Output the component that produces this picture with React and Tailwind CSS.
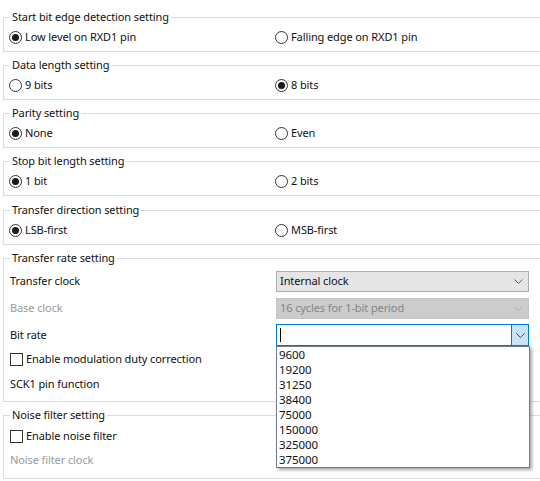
import React from "react";

const font = { fontFamily: '"Noto Sans", "Open Sans", sans-serif' };

function Radio({ checked, label }) {
  return (
    <div className="flex items-center gap-[3px] w-[266px] shrink-0">
      <span className="flex h-[13px] w-[13px] items-center justify-center rounded-full border border-[#333333] bg-white">
        {checked && <span className="h-[7px] w-[7px] rounded-full bg-[#1a1a1a]" />}
      </span>
      <span>{label}</span>
    </div>
  );
}

function Checkbox({ label, className = "" }) {
  return (
    <div className={"flex h-[22px] items-center gap-[3px] pl-[6px] " + className}>
      <span className="h-[13px] w-[13px] border border-[#333333] bg-white" />
      <span>{label}</span>
    </div>
  );
}

function Chevron({ color = "#606060" }) {
  return (
    <svg width="9" height="5" viewBox="0 0 9 5" fill="none">
      <path d="M0.5 0.5 L4.5 4.5 L8.5 0.5" stroke={color} strokeWidth="1" />
    </svg>
  );
}

function Group({ title, children, className = "" }) {
  return (
    <fieldset className={"ml-[3px] w-[560px] border border-[#dcdcdc] px-0 " + className}>
      <legend className="ml-[6px] px-[2px] leading-[16px]">{title}</legend>
      {children}
    </fieldset>
  );
}

function RadioGroup({ title, options, checked, className = "mt-[5px]" }) {
  return (
    <Group title={title} className={"pb-[4px] pt-[2px] " + className}>
      <div className="flex h-[20px] items-center pl-[5px]">
        {options.map((o, i) => (
          <Radio key={o} label={o} checked={i === checked} />
        ))}
      </div>
    </Group>
  );
}

const rates = ["9600", "19200", "31250", "38400", "75000", "150000", "325000", "375000"];

export default function App() {
  return (
    <div
      className="h-[481px] w-[540px] overflow-hidden bg-white text-[11px] tracking-[-0.1px] text-[#111111]"
      style={font}
    >
      <div className="pt-[4px]">
        <RadioGroup
          title="Start bit edge detection setting"
          options={["Low level on RXD1 pin", "Falling edge on RXD1 pin"]}
          checked={0}
        />
        <RadioGroup title="Data length setting" options={["9 bits", "8 bits", "7 bits"]} checked={1} />
        <RadioGroup title="Parity setting" options={["None", "Even", "Odd"]} checked={0} />
        <RadioGroup title="Stop bit length setting" options={["1 bit", "2 bits"]} checked={0} />
        <RadioGroup
          title="Transfer direction setting"
          options={["LSB-first", "MSB-first"]}
          checked={0}
          className="mt-[6px]"
        />

        <Group title="Transfer rate setting" className="mt-[5px] pb-[6px] pt-[4px]">
          <div className="flex h-[22px] items-center">
            <span className="w-[272px] shrink-0 pl-[6px]">Transfer clock</span>
            <div className="flex h-[21px] w-[253px] items-center justify-between border border-[#adadad] bg-[#e5e5e5] pl-[3px] pr-[5px]">
              <span>Internal clock</span>
              <Chevron />
            </div>
          </div>
          <div className="mt-[5px] flex h-[22px] items-center">
            <span className="w-[272px] shrink-0 pl-[6px] text-[#9a9a9a]">Base clock</span>
            <div className="flex h-[21px] w-[253px] items-center justify-between border border-[#c4c4c4] bg-[#cccccc] pl-[3px] pr-[5px] text-[#858585]">
              <span>16 cycles for 1-bit period</span>
              <Chevron color="#a8a8a8" />
            </div>
          </div>
          <div className="mt-[5px] flex h-[22px] items-center">
            <span className="w-[272px] shrink-0 pl-[6px]">Bit rate</span>
            <div className="relative h-[22px] w-[253px]">
              <div className="flex h-[22px] items-center border border-[#0078d7] bg-white">
                <span className="ml-[3px] h-[14px] w-px bg-black" />
                <div className="ml-auto flex h-full w-[17px] items-center justify-center border-l border-[#0078d7] bg-[#cce4f7]">
                  <Chevron color="#404040" />
                </div>
              </div>
              <div className="absolute left-0 top-full z-10 w-[254px] border border-[#6d7b8a] bg-white pl-[2px] text-[11.5px] shadow-[2px_2px_3px_rgba(0,0,0,0.35)]">
                {rates.map((r) => (
                  <div key={r} className="h-[15px] leading-[15px]">
                    {r}
                  </div>
                ))}
              </div>
            </div>
          </div>
          <Checkbox label="Enable modulation duty correction" className="mt-[2px]" />
          <div className="mt-[3px] flex h-[22px] items-center pl-[6px]">SCK1 pin function</div>
        </Group>

        <Group title="Noise filter setting" className="mt-[5px] pb-[7px] pt-[2px]">
          <Checkbox label="Enable noise filter" />
          <div className="mt-[2px] flex h-[22px] items-center pl-[6px] text-[#9a9a9a]">
            Noise filter clock
          </div>
        </Group>
      </div>
    </div>
  );
}
